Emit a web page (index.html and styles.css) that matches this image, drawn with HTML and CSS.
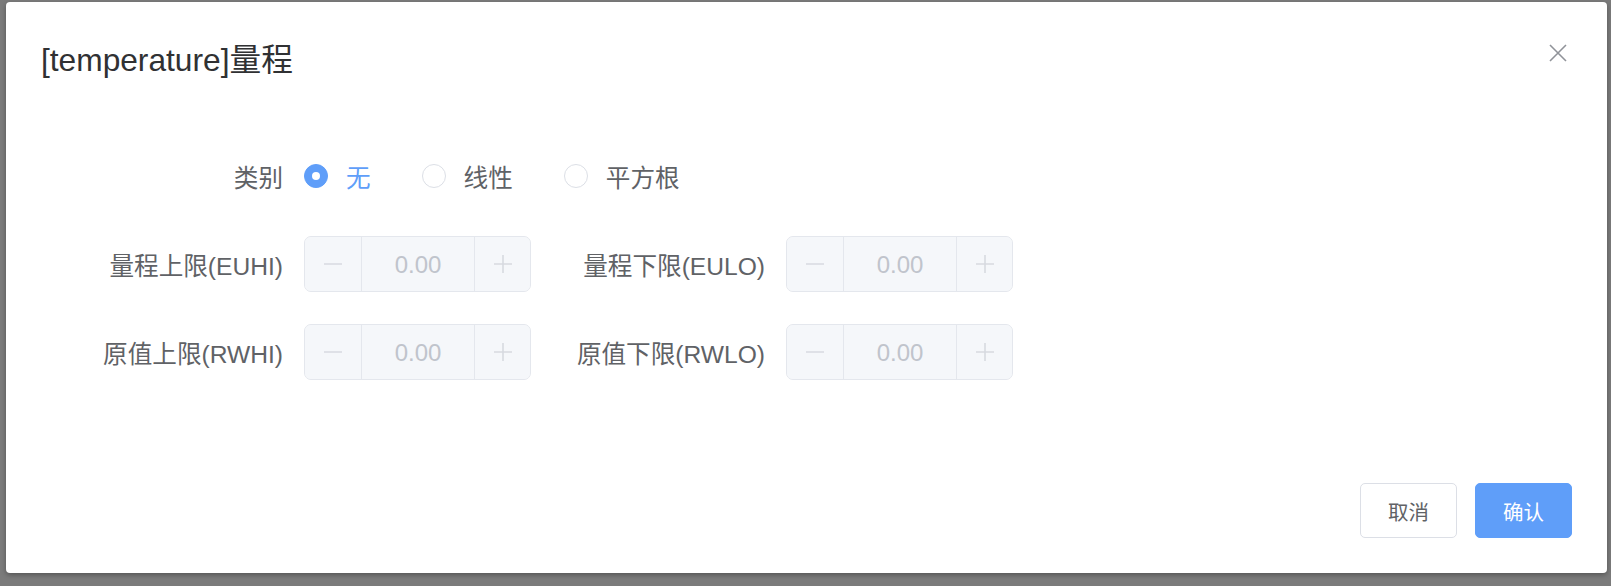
FILE: index.html
```html
<!DOCTYPE html>
<html lang="zh-CN">
<head>
<meta charset="utf-8">
<title>量程</title>
<link rel="stylesheet" href="styles.css">
</head>
<body>
<div class="overlay">
  <div class="dialog">
    <div class="dialog-header">
      <span class="dialog-title">[temperature]量程</span>
      <button class="dialog-close" type="button" aria-label="关闭">
        <svg width="18" height="18" viewBox="0 0 18 18"><path d="M1 1 L17 17 M17 1 L1 17" stroke="#909399" stroke-width="1.6" fill="none"/></svg>
      </button>
    </div>
    <div class="dialog-body">
      <div class="form-row">
        <div class="form-item">
          <label class="form-label">类别</label>
          <div class="radio-group">
            <span class="radio is-checked"><span class="radio-inner"></span><span class="radio-label">无</span></span>
            <span class="radio"><span class="radio-inner"></span><span class="radio-label">线性</span></span>
            <span class="radio"><span class="radio-inner"></span><span class="radio-label">平方根</span></span>
          </div>
        </div>
      </div>
      <div class="form-row">
        <div class="form-item">
          <label class="form-label">量程上限(EUHI)</label>
          <div class="input-number">
            <span class="in-btn in-dec"><svg width="18" height="18" viewBox="0 0 18 18"><path d="M0 9 H18" stroke="#d7dae0" stroke-width="1.6"/></svg></span>
            <span class="in-value">0.00</span>
            <span class="in-btn in-inc"><svg width="18" height="18" viewBox="0 0 18 18"><path d="M0 9 H18 M9 0 V18" stroke="#d7dae0" stroke-width="1.6"/></svg></span>
          </div>
        </div>
        <div class="form-item">
          <label class="form-label">量程下限(EULO)</label>
          <div class="input-number">
            <span class="in-btn in-dec"><svg width="18" height="18" viewBox="0 0 18 18"><path d="M0 9 H18" stroke="#d7dae0" stroke-width="1.6"/></svg></span>
            <span class="in-value">0.00</span>
            <span class="in-btn in-inc"><svg width="18" height="18" viewBox="0 0 18 18"><path d="M0 9 H18 M9 0 V18" stroke="#d7dae0" stroke-width="1.6"/></svg></span>
          </div>
        </div>
      </div>
      <div class="form-row">
        <div class="form-item">
          <label class="form-label">原值上限(RWHI)</label>
          <div class="input-number">
            <span class="in-btn in-dec"><svg width="18" height="18" viewBox="0 0 18 18"><path d="M0 9 H18" stroke="#d7dae0" stroke-width="1.6"/></svg></span>
            <span class="in-value">0.00</span>
            <span class="in-btn in-inc"><svg width="18" height="18" viewBox="0 0 18 18"><path d="M0 9 H18 M9 0 V18" stroke="#d7dae0" stroke-width="1.6"/></svg></span>
          </div>
        </div>
        <div class="form-item">
          <label class="form-label">原值下限(RWLO)</label>
          <div class="input-number">
            <span class="in-btn in-dec"><svg width="18" height="18" viewBox="0 0 18 18"><path d="M0 9 H18" stroke="#d7dae0" stroke-width="1.6"/></svg></span>
            <span class="in-value">0.00</span>
            <span class="in-btn in-inc"><svg width="18" height="18" viewBox="0 0 18 18"><path d="M0 9 H18 M9 0 V18" stroke="#d7dae0" stroke-width="1.6"/></svg></span>
          </div>
        </div>
      </div>
    </div>
    <div class="dialog-footer">
      <button class="btn btn-default" type="button">取消</button>
      <button class="btn btn-primary" type="button">确认</button>
    </div>
  </div>
</div>
</body>
</html>
```
FILE: styles.css
```css
* { box-sizing: border-box; }
html, body { margin: 0; padding: 0; }
body {
  font-family: "Liberation Sans", "Noto Sans CJK SC", sans-serif;
  background: #7b7b7b;
}
.overlay {
  width: 1611px;
  height: 586px;
  background: #7b7b7b;
  overflow: hidden;
  padding: 2px 0 0 6px;
}
.dialog {
  width: 1601px;
  height: 571px;
  background: #fff;
  border-radius: 4px;
  box-shadow: 0 2px 5px rgba(0,0,0,0.3);
  display: flex;
  flex-direction: column;
}
.dialog-header {
  display: flex;
  justify-content: space-between;
  align-items: flex-start;
  padding: 40px 35px 0 35px;
}
.dialog-title {
  font-size: 31.7px;
  line-height: 36px;
  color: #303133;
}
.dialog-close {
  border: 0;
  background: none;
  padding: 0;
  margin: 2px 5px 0 0;
  width: 18px;
  height: 18px;
  display: flex;
}
.dialog-body {
  padding: 70px 0 0 60px;
  display: flex;
  flex-direction: column;
  gap: 32px;
}
.form-row {
  display: flex;
  height: 56px;
}
.form-item {
  display: flex;
  align-items: center;
  margin-right: 17px;
}
.form-label {
  width: 238px;
  padding-right: 21px;
  text-align: right;
  font-size: 24.6px;
  color: #606266;
  white-space: nowrap;
}
.radio-group {
  display: flex;
  align-items: center;
}
.radio {
  display: flex;
  align-items: center;
  margin-right: 51px;
  color: #606266;
  font-size: 24.6px;
}
.radio-inner {
  width: 24px;
  height: 24px;
  border: 1px solid #dcdfe6;
  border-radius: 50%;
  background: #fff;
  display: flex;
  align-items: center;
  justify-content: center;
}
.radio-label {
  padding-left: 18px;
}
.radio.is-checked .radio-inner {
  background: #5f9ef9;
  border-color: #5f9ef9;
}
.radio.is-checked .radio-inner::after {
  content: "";
  width: 8px;
  height: 8px;
  border-radius: 50%;
  background: #fff;
}
.radio.is-checked .radio-label {
  color: #5f9ef9;
}
.input-number {
  display: flex;
  width: 227px;
  height: 56px;
  border: 1px solid #e4e7ed;
  border-radius: 7px;
  background: #f5f7fa;
  overflow: hidden;
}
.in-btn {
  display: flex;
  align-items: center;
  justify-content: center;
  background: #f5f7fa;
}
.in-dec {
  width: 57px;
  border-right: 1px solid #e4e7ed;
}
.in-inc {
  width: 56px;
  border-left: 1px solid #e4e7ed;
}
.in-value {
  flex: 1;
  display: flex;
  align-items: center;
  justify-content: center;
  padding-top: 2px;
  font-size: 24px;
  color: #c0c4cc;
}
.dialog-footer {
  margin-top: auto;
  display: flex;
  justify-content: flex-end;
  gap: 18px;
  padding: 0 35px 35px 0;
}
.btn {
  height: 55px;
  padding: 0 27px;
  font-family: "Liberation Sans", "Noto Sans CJK SC", sans-serif;
  font-size: 20.5px;
  border-radius: 5px;
  border: 1px solid #dcdfe6;
  background: #fff;
  color: #606266;
}
.btn-primary {
  background: #5f9ef9;
  border-color: #5f9ef9;
  color: #fff;
}
```
